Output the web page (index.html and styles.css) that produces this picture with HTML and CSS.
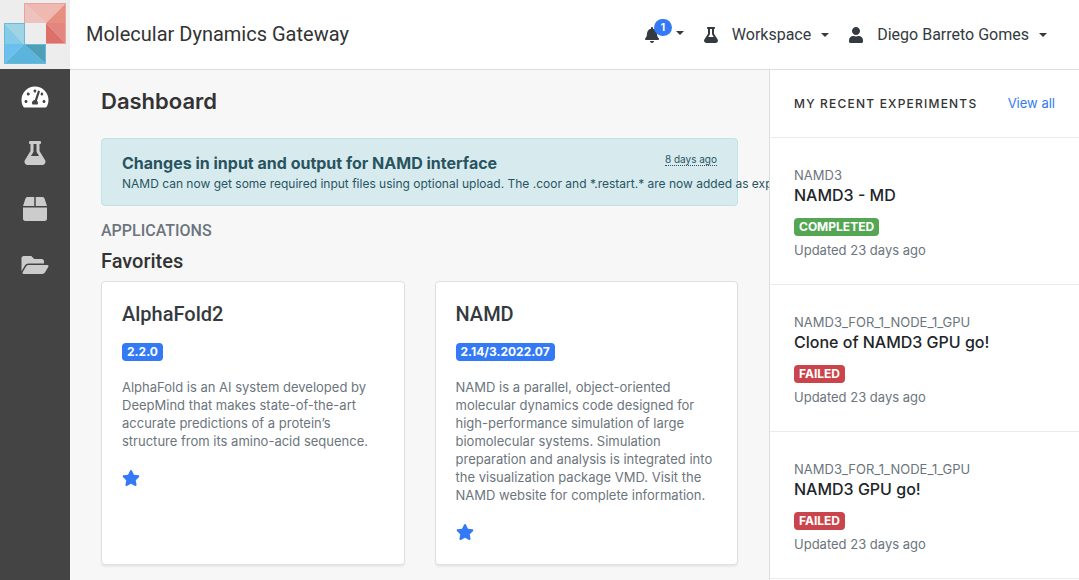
FILE: index.html
```html
<!DOCTYPE html>
<html lang="en">
<head>
<meta charset="utf-8">
<meta name="viewport" content="width=device-width, initial-scale=1">
<title>Molecular Dynamics Gateway</title>
<link rel="stylesheet" href="styles.css">
</head>
<body>
<svg class="sprite" aria-hidden="true">
  <symbol id="flask" viewBox="0 0 448 512"><path d="M437.2 403.5L320 215V64h8c13.3 0 24-10.7 24-24V24c0-13.3-10.7-24-24-24H120c-13.3 0-24 10.7-24 24v16c0 13.3 10.7 24 24 24h8v151L10.8 403.5C-18.5 450.6 15.3 512 70.9 512h306.2c55.7 0 89.4-61.5 60.1-108.5zM137.9 320l48.2-77.6c3.7-5.2 5.8-11.6 5.8-18.4V64h64v160c0 6.9 2.2 13.2 5.8 18.4l48.2 77.6h-172z"/></symbol>
  <symbol id="star" viewBox="0 0 576 512"><path d="M259.3 17.8L194 150.2 47.9 171.5c-26.2 3.8-36.7 36.1-17.7 54.6l105.7 103-25 145.5c-4.5 26.3 23.2 46 46.4 33.7L288 439.6l130.7 68.7c23.2 12.2 50.9-7.4 46.4-33.7l-25-145.5 105.7-103c19-18.5 8.5-50.8-17.7-54.6L382 150.2 316.7 17.8c-11.7-23.6-45.6-23.9-57.4 0z"/></symbol>
</svg>
<header class="topbar">
  <a class="logo" href="#" aria-label="Home">
    <svg width="70" height="69" viewBox="0 0 70 69" aria-hidden="true">
      <path fill="#efb8b1" d="M24 3h42L46 23z"/>
      <path fill="#ecc3bf" d="M24 3v20h22z"/>
      <path fill="#e8907f" d="M66 3v20H46z"/>
      <path fill="#e48680" d="M46 23h20v21z"/>
      <path fill="#de706a" d="M46 23l20 21H46z"/>
      <path fill="#a0d3e3" d="M4 23h20v21z"/>
      <path fill="#83cbe8" d="M4 23l20 21H4z"/>
      <path fill="#69c0ee" d="M4 44h20L4 64z"/>
      <path fill="#5ab4dc" d="M4 64l20-20 22 20z"/>
      <path fill="#4e9fb7" d="M24 44h22v20z"/>
      <path fill="none" stroke="#e9a39c" d="M24.500 23V3.500h41v40H46"/>
      <path fill="none" stroke="#68b9da" d="M24 23.500H4.500v40h41v-19H24.500V23"/>
    </svg>
  </a>
  <a class="brand" href="#">Molecular Dynamics Gateway</a>
  <nav class="menus" aria-label="Account">
    <button class="menu notices" type="button" aria-label="Notifications">
      <span class="bell">
        <svg class="icon" viewBox="0 0 448 512" aria-hidden="true"><path d="M224 512c35.32 0 63.97-28.65 63.97-64H160.03c0 35.35 28.65 64 63.97 64zm215.39-149.71c-19.32-20.76-55.47-51.99-55.47-154.29 0-77.7-54.48-139.9-127.94-155.16V32c0-17.67-14.32-32-31.98-32s-31.98 14.33-31.98 32v20.84C118.56 68.1 64.08 130.3 64.08 208c0 102.3-36.15 133.53-55.47 154.29-6 6.45-8.66 14.16-8.61 21.71.11 16.4 12.98 32 32.1 32h383.8c19.12 0 32-15.6 32.1-32 .05-7.55-2.61-15.27-8.61-21.71z"/></svg>
        <span class="count">1</span>
      </span>
      <span class="caret"></span>
    </button>
    <button class="menu" type="button">
      <svg class="icon" aria-hidden="true"><use href="#flask"/></svg>
      <span class="menu-label">Workspace</span>
      <span class="caret"></span>
    </button>
    <button class="menu" type="button">
      <svg class="icon" viewBox="0 0 448 512" aria-hidden="true"><path d="M224 256c70.7 0 128-57.3 128-128S294.7 0 224 0 96 57.3 96 128s57.3 128 128 128zm89.6 32h-16.7c-22.2 10.2-46.9 16-72.9 16s-50.6-5.8-72.9-16h-16.7C60.2 288 0 348.2 0 422.4V464c0 26.5 21.5 48 48 48h352c26.5 0 48-21.5 48-48v-41.6c0-74.2-60.2-134.4-134.4-134.4z"/></svg>
      <span class="menu-label">Diego Barreto Gomes</span>
      <span class="caret"></span>
    </button>
  </nav>
</header>
<div class="shell">
  <nav class="rail" aria-label="Workspace">
    <a class="rail-link active" href="#" aria-label="Dashboard"><svg viewBox="0 0 576 512" aria-hidden="true"><path d="M288 32C128.94 32 0 160.94 0 320c0 52.8 14.25 102.26 39.06 144.8 5.61 9.62 16.3 15.2 27.44 15.2h443c11.14 0 21.83-5.58 27.44-15.2C561.75 422.26 576 372.8 576 320c0-159.06-128.94-288-288-288zm0 64c14.71 0 26.58 10.13 30.32 23.65-1.11 2.26-2.64 4.23-3.45 6.67l-9.22 27.67c-5.13 3.49-10.97 6.01-17.64 6.01-17.67 0-32-14.33-32-32S270.33 96 288 96zM96 384c-17.67 0-32-14.33-32-32s14.33-32 32-32 32 14.33 32 32-14.33 32-32 32zm48-160c-17.67 0-32-14.33-32-32s14.33-32 32-32 32 14.33 32 32-14.33 32-32 32zm246.77-72.41l-61.33 184C343.13 347.33 352 364.54 352 384c0 11.72-3.38 22.55-8.88 32H232.88c-5.5-9.45-8.88-20.28-8.88-32 0-33.94 26.5-61.43 59.9-63.59l61.34-184.01c4.17-12.56 17.73-19.45 30.36-15.17 12.57 4.19 19.35 17.79 15.17 30.36zm14.66 57.2l15.52-46.55c3.47-1.29 7.13-2.23 11.05-2.23 17.67 0 32 14.33 32 32s-14.33 32-32 32c-11.38-.01-20.89-6.28-26.57-15.22zM480 384c-17.67 0-32-14.33-32-32s14.33-32 32-32 32 14.33 32 32-14.33 32-32 32z"/></svg></a>
    <a class="rail-link" href="#" aria-label="Experiments"><svg aria-hidden="true"><use href="#flask"/></svg></a>
    <a class="rail-link" href="#" aria-label="Projects"><svg viewBox="0 0 512 512" aria-hidden="true"><path d="M509.5 184.6L458.9 32.8C452.4 13.2 434.1 0 413.4 0H272v192h238.7c-.4-2.5-.4-5-1.2-7.4zM240 0H98.6c-20.7 0-39 13.2-45.5 32.8L2.500 184.6c-.8 2.4-.8 4.9-1.2 7.4H240V0zM0 224v240c0 26.5 21.5 48 48 48h416c26.5 0 48-21.5 48-48V224H0z"/></svg></a>
    <a class="rail-link" href="#" aria-label="Storage"><svg viewBox="0 0 576 512" aria-hidden="true"><path d="M572.694 292.093L500.27 416.248A63.997 63.997 0 0 1 444.989 448H45.025c-18.523 0-30.064-20.093-20.731-36.093l72.424-124.155A64 64 0 0 1 152 256h399.964c18.523 0 30.064 20.093 20.73 36.093zM152 224h328v-48c0-26.51-21.49-48-48-48H272l-64-64H48C21.49 64 0 85.49 0 112v278.046l69.077-118.418C86.214 242.25 117.989 224 152 224z"/></svg></a>
  </nav>
  <main class="content">
    <h1 class="page-title">Dashboard</h1>
    <section class="alert">
      <div class="alert-head">
        <h2 class="alert-title">Changes in input and output for NAMD interface</h2>
        <span class="alert-age">8 days ago</span>
      </div>
      <p class="alert-text">NAMD can now get some required input files using optional upload. The .coor and *.restart.* are now added as expl</p>
    </section>
    <h2 class="group-title">APPLICATIONS</h2>
    <h3 class="list-title">Favorites</h3>
    <div class="cards">
      <article class="card">
        <h4 class="card-title">AlphaFold2</h4>
        <span class="badge">2.2.0</span>
        <p class="card-text">AlphaFold is an AI system developed by DeepMind that makes state-of-the-art accurate predictions of a protein’s structure from its amino-acid sequence.</p>
        <button class="favorite" type="button" aria-label="Remove AlphaFold2 from favorites"><svg aria-hidden="true"><use href="#star"/></svg></button>
      </article>
      <article class="card">
        <h4 class="card-title">NAMD</h4>
        <span class="badge">2.14/3.2022.07</span>
        <p class="card-text">NAMD is a parallel, object-oriented molecular dynamics code designed for high-performance simulation of large biomolecular systems. Simulation preparation and analysis is integrated into the visualization package VMD. Visit the NAMD website for complete information.</p>
        <button class="favorite" type="button" aria-label="Remove NAMD from favorites"><svg aria-hidden="true"><use href="#star"/></svg></button>
      </article>
    </div>
  </main>
  <aside class="recent">
    <div class="recent-head">
      <h2 class="recent-title">MY RECENT EXPERIMENTS</h2>
      <a class="view-all" href="#">View all</a>
    </div>
    <a class="run" href="#">
      <span class="run-app">NAMD3</span>
      <span class="run-name">NAMD3 - MD</span>
      <span class="badge success">COMPLETED</span>
      <span class="run-age">Updated 23 days ago</span>
    </a>
    <a class="run" href="#">
      <span class="run-app">NAMD3_FOR_1_NODE_1_GPU</span>
      <span class="run-name">Clone of NAMD3 GPU go!</span>
      <span class="badge danger">FAILED</span>
      <span class="run-age">Updated 23 days ago</span>
    </a>
    <a class="run" href="#">
      <span class="run-app">NAMD3_FOR_1_NODE_1_GPU</span>
      <span class="run-name">NAMD3 GPU go!</span>
      <span class="badge danger">FAILED</span>
      <span class="run-age">Updated 23 days ago</span>
    </a>
  </aside>
</div>
</body>
</html>
```
FILE: styles.css
```css
*, *::before, *::after { box-sizing: border-box; }
body {
  margin: 0;
  height: 100vh;
  display: flex;
  flex-direction: column;
  overflow: hidden;
  background: #f7f7f7;
  color: #333;
  font: 400 13px/18px Inter, "Liberation Sans", sans-serif;
}
h1, h2, h3, h4, p { margin: 0; font-weight: 500; }
a { color: inherit; text-decoration: none; }
button { padding: 0; border: 0; background: none; color: inherit; font: inherit; cursor: pointer; }
svg { display: block; fill: currentColor; }
.sprite { display: none; }

.topbar {
  flex: none;
  display: flex;
  align-items: center;
  background: #fff;
  border-bottom: 1px solid #dcdddd;
}
.logo { background: #ededed; }
.brand, .menu-label, .list-title, .card-title { font-family: Roboto, Inter, sans-serif; }
.brand { padding: 0 0 2px 16px; font-size: 20px; line-height: 30px; }
.menus { display: flex; align-items: center; gap: 19px; margin-left: auto; padding: 0 32px 0 0; color: #343a40; }
.menu { display: flex; align-items: center; font-size: 16px; line-height: 24px; }
.icon { width: 16px; height: 16px; }
.menu-label { margin: 0 10px 0 13px; }
.caret { border: 4px solid transparent; border-top-color: currentColor; border-bottom: 0; }
.bell { position: relative; margin-right: 16px; }
.notices .caret { margin-bottom: 4px; }
.count {
  position: absolute;
  left: 10px;
  bottom: 7px;
  width: 18px;
  height: 17px;
  border-radius: 9px;
  background: #347af6;
  color: #fff;
  font-size: 10px;
  font-weight: 700;
  line-height: 17px;
  text-align: center;
}

.shell { flex: 1; min-height: 0; display: flex; }
.rail { flex: none; width: 70px; margin-top: -1px; background: #444; color: #ccc; }
.rail-link { display: flex; align-items: center; justify-content: center; height: 56px; }
.rail-link svg { width: 28px; height: 24px; }
.rail-link.active { color: #fff; }

.content { flex: 1; min-width: 0; overflow: hidden; padding: 16px 31px 0; }
.page-title { font-size: 22px; font-weight: 600; line-height: 30px; }
.alert {
  margin-top: 22px;
  padding: 14px 20px 11px;
  border: 1px solid #c0e3e9;
  border-radius: 4px;
  background: #d7ebef;
  color: #29545f;
}
.alert-head { display: flex; justify-content: space-between; }
.alert-title { font-size: 16px; font-weight: 700; line-height: 21px; }
.alert-age { font-size: 10px; line-height: 12px; align-self: flex-start; border-bottom: 1px dotted; }
.alert-text { font-size: 12px; font-weight: 400; line-height: 20px; white-space: nowrap; }
.group-title { margin-top: 15px; color: #6c757d; font-family: Roboto, Inter, sans-serif; font-size: 16px; line-height: 20px; }
.list-title { margin-top: 8px; font-size: 20px; line-height: 24px; }
.cards { display: grid; grid-template-columns: 1fr 1fr; gap: 30px; margin-top: 8px; }
.card {
  padding: 20px 20px 24px;
  border: 1px solid #dfdfdf;
  border-radius: 4px;
  background: #fff;
  box-shadow: 0 2px 2px rgba(0, 0, 0, .06);
}
.card-title { color: #343a40; font-size: 20px; line-height: 24px; }
.badge {
  display: block;
  width: fit-content;
  padding: 0 5px;
  border-radius: 4px;
  background: #347af6;
  color: #fff;
  font-size: 12px;
  font-weight: 700;
  line-height: 18px;
}
.card .badge { margin: 17px 0; }
.card-text { color: #6c757d; font-weight: 400; }
.favorite { display: block; margin-top: 20px; }
.favorite svg { width: 18px; height: 16px; color: #347af6; }

.recent { flex: none; width: 310px; overflow: hidden; border-left: 1px solid #dcdddd; background: #fff; }
.recent-head, .run { padding: 24px; border-bottom: 1px solid #ebebeb; }
.recent-head { display: flex; align-items: center; justify-content: space-between; line-height: 19px; }
.recent-title { font-size: 12px; letter-spacing: .1em; }
.view-all { color: #347af6; }
.run { display: block; padding-top: 27px; color: #6c757d; line-height: 20px; }
.run-app, .run-name, .run-age { display: block; }
.run-name { color: #212529; font-size: 16px; font-weight: 500; }
.run .badge { margin: 13px 0 4px; }
.success { background: #55a653; }
.danger { background: #ca444b; }
```
